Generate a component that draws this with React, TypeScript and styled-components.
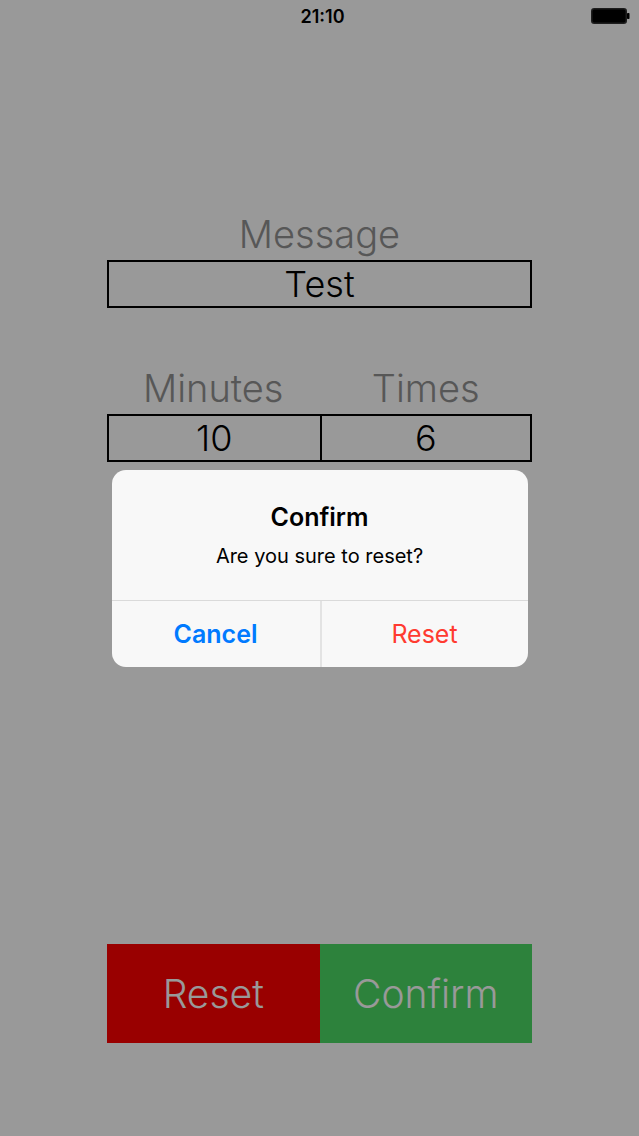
import React from 'react';
import styled, { createGlobalStyle } from 'styled-components';

const GlobalStyle = createGlobalStyle`
  html, body { margin: 0; padding: 0; background: #ffffff; }
  body {
    width: 639px;
    height: 1136px;
    overflow: hidden;
    font-family: Inter, "Noto Sans CJK JP", sans-serif;
  }
  #root { width: 639px; height: 1136px; }
`;

const Screen = styled.div`
  position: relative;
  width: 639px;
  height: 1136px;
  background: #ffffff;
  display: flex;
  flex-direction: column;
  align-items: center;
  box-sizing: border-box;
`;

const StatusBar = styled.div`
  align-self: stretch;
  height: 32px;
  display: grid;
  grid-template-columns: 1fr auto 1fr;
  align-items: center;
`;

const Time = styled.div`
  grid-column: 2;
  font-family: Inter, "Liberation Sans", sans-serif;
  font-weight: 600;
  font-size: 18px;
  color: #000;
  padding-left: 6px;
`;

const BatteryWrap = styled.div`
  grid-column: 3;
  justify-self: end;
  padding-right: 8px;
  display: flex;
  align-items: center;
`;

const Label = styled.div<{ $top?: number }>`
  font-size: 38px;
  line-height: 44px;
  font-weight: 300;
  color: #919191;
  text-align: center;
  margin-top: ${(p) => p.$top ?? 0}px;
`;

const Field = styled.div`
  width: 425px;
  height: 48px;
  margin-top: 4px;
  box-sizing: border-box;
  border: 2px solid #000;
  display: flex;
  align-items: center;
  justify-content: center;
  font-size: 36px;
  line-height: 1;
  font-weight: 300;
  color: #000;
`;

const LabelRow = styled.div`
  width: 425px;
  display: grid;
  grid-template-columns: 1fr 1fr;
  margin-top: 58px;
`;

const SplitField = styled.div`
  width: 425px;
  height: 48px;
  margin-top: 4px;
  box-sizing: border-box;
  border: 2px solid #000;
  display: grid;
  grid-template-columns: 1fr 1fr;
  grid-template-rows: 100%;
`;

const Cell = styled.div<{ $divider?: boolean }>`
  display: flex;
  align-items: center;
  justify-content: center;
  font-size: 36px;
  line-height: 1;
  font-weight: 300;
  color: #000;
  border-left: ${(p) => (p.$divider ? '2px solid #000' : 'none')};
`;

const ActionBar = styled.div`
  width: 425px;
  height: 99px;
  margin-top: auto;
  margin-bottom: 93px;
  display: grid;
  grid-template-columns: 1fr 1fr;
`;

const ActionButton = styled.div<{ $bg: string }>`
  background: ${(p) => p.$bg};
  display: flex;
  align-items: center;
  justify-content: center;
  font-size: 39px;
  font-weight: 300;
  color: #ffffff;
`;

const Dim = styled.div`
  position: absolute;
  inset: 0;
  background: rgba(0, 0, 0, 0.4);
  display: flex;
  align-items: center;
  justify-content: center;
`;

const Alert = styled.div`
  width: 416px;
  border-radius: 14px;
  background: #f8f8f8;
  overflow: hidden;
  font-family: Inter, "Liberation Sans", sans-serif;
  display: flex;
  flex-direction: column;
`;

const AlertBody = styled.div`
  padding: 32px 16px 32px;
  display: flex;
  flex-direction: column;
  align-items: center;
  gap: 12px;
`;

const AlertTitle = styled.div`
  font-size: 25px;
  line-height: 30px;
  font-weight: 600;
  color: #000;
`;

const AlertMessage = styled.div`
  font-size: 20px;
  line-height: 24px;
  font-weight: 400;
  color: #000;
`;

const AlertButtons = styled.div`
  height: 66px;
  border-top: 1px solid #dadada;
  display: grid;
  grid-template-columns: 1fr 1fr;
`;

const AlertButton = styled.div<{ $color: string; $bold?: boolean; $divider?: boolean }>`
  display: flex;
  align-items: center;
  justify-content: center;
  font-size: 25px;
  font-weight: ${(p) => (p.$bold ? 600 : 400)};
  color: ${(p) => p.$color};
  border-left: ${(p) => (p.$divider ? '2px solid #e3e3e3' : 'none')};
`;

const Battery = () => (
  <svg width="40" height="16" viewBox="0 0 40 16">
    <rect x="0.75" y="0.75" width="34.5" height="14.5" rx="2.5" fill="#000" stroke="#333" strokeWidth="1.5" />
    <rect x="36" y="5" width="2.5" height="6" rx="0.8" fill="#000" />
  </svg>
);

export default function App() {
  return (
    <>
      <GlobalStyle />
      <Screen>
        <StatusBar>
          <Time>21:10</Time>
          <BatteryWrap>
            <Battery />
          </BatteryWrap>
        </StatusBar>
        <Label $top={180}>Message</Label>
        <Field>Test</Field>
        <LabelRow>
          <Label>Minutes</Label>
          <Label>Times</Label>
        </LabelRow>
        <SplitField>
          <Cell>10</Cell>
          <Cell $divider>6</Cell>
        </SplitField>
        <ActionBar>
          <ActionButton $bg="#ff0000">Reset</ActionButton>
          <ActionButton $bg="#4cd964">Confirm</ActionButton>
        </ActionBar>
        <Dim>
          <Alert>
            <AlertBody>
              <AlertTitle>Confirm</AlertTitle>
              <AlertMessage>Are you sure to reset?</AlertMessage>
            </AlertBody>
            <AlertButtons>
              <AlertButton $color="#007aff" $bold>Cancel</AlertButton>
              <AlertButton $color="#ff3b30" $divider>Reset</AlertButton>
            </AlertButtons>
          </Alert>
        </Dim>
      </Screen>
    </>
  );
}
